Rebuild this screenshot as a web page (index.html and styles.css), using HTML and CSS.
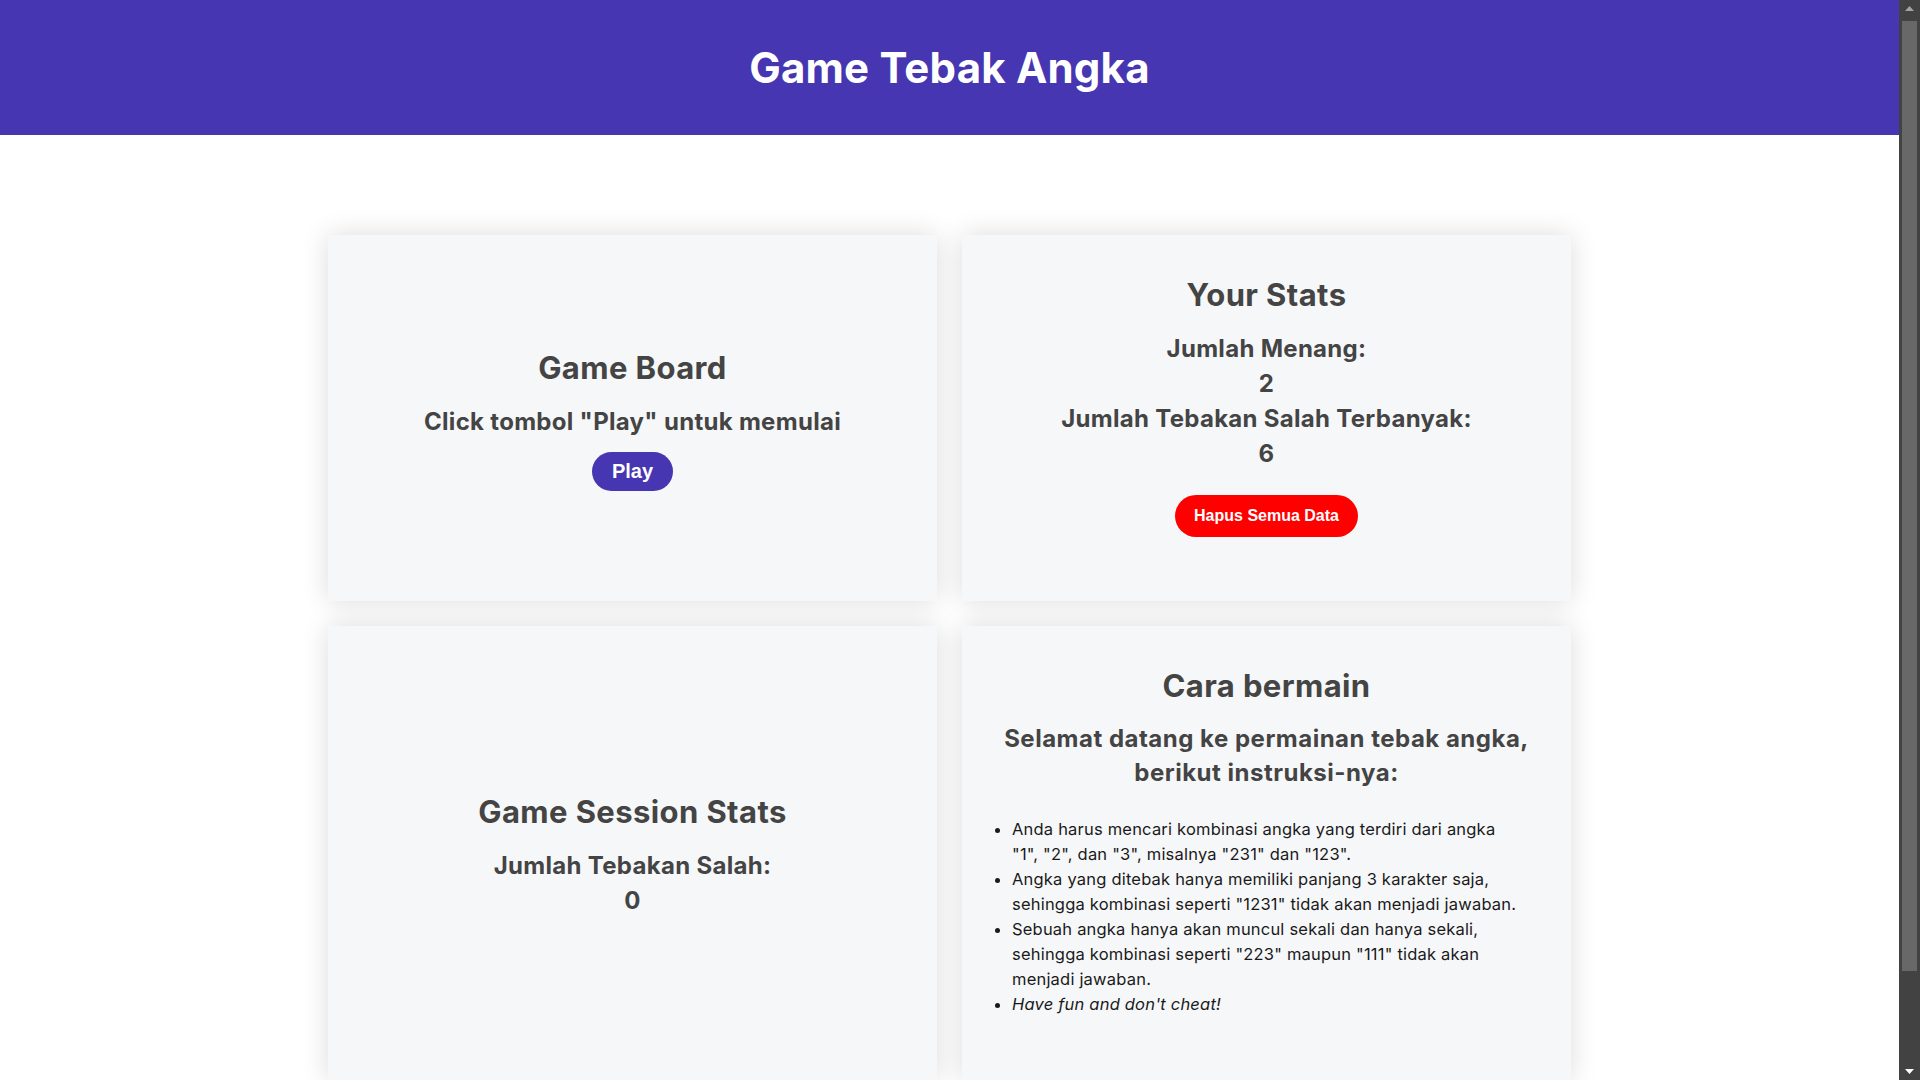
FILE: index.html
```html
<!DOCTYPE html>
<html lang="id">
<head>
<meta charset="utf-8">
<title>Game Tebak Angka</title>
<link rel="stylesheet" href="styles.css">
</head>
<body>
<header class="site-header">
  <h1 class="site-title">Game Tebak Angka</h1>
</header>
<main class="board">
  <section class="card">
    <h2 class="card-title">Game Board</h2>
    <h3 class="card-line">Click tombol "Play" untuk memulai</h3>
    <button class="btn btn-play" type="button">Play</button>
  </section>
  <section class="card">
    <h2 class="card-title">Your Stats</h2>
    <h3 class="card-line">Jumlah Menang:</h3>
    <p class="card-line">2</p>
    <h3 class="card-line">Jumlah Tebakan Salah Terbanyak:</h3>
    <p class="card-line">6</p>
    <button class="btn btn-danger card-last" type="button">Hapus Semua Data</button>
  </section>
  <section class="card">
    <h2 class="card-title">Game Session Stats</h2>
    <h3 class="card-line">Jumlah Tebakan Salah:</h3>
    <p class="card-line">0</p>
  </section>
  <section class="card">
    <h2 class="card-title">Cara bermain</h2>
    <h3 class="card-intro">Selamat datang ke permainan tebak angka, berikut instruksi-nya:</h3>
    <ul class="rules card-last">
      <li>Anda harus mencari kombinasi angka yang terdiri dari angka "1", "2", dan "3", misalnya "231" dan "123".</li>
      <li>Angka yang ditebak hanya memiliki panjang 3 karakter saja, sehingga kombinasi seperti "1231" tidak akan menjadi jawaban.</li>
      <li>Sebuah angka hanya akan muncul sekali dan hanya sekali, sehingga kombinasi seperti "223" maupun "111" tidak akan menjadi jawaban.</li>
      <li><em>Have fun and don't cheat!</em></li>
    </ul>
  </section>
</main>
<div class="scrollbar" aria-hidden="true">
  <div class="sb-button">
    <svg width="9" height="5" viewBox="0 0 9 5"><path d="M0 5L4.5 0L9 5z" fill="#a3a3a3"/></svg>
  </div>
  <div class="sb-track"><div class="sb-thumb"></div></div>
  <div class="sb-button">
    <svg width="9" height="5" viewBox="0 0 9 5"><path d="M0 0L4.5 5L9 0z" fill="#ffffff"/></svg>
  </div>
</div>
</body>
</html>
```

FILE: styles.css
```css
html {
  background: #ffffff;
}

body {
  margin: 0 21px 0 0;
  font-family: Inter, "Open Sans", sans-serif;
  color: #444444;
  background: #ffffff;
}

.site-header {
  height: 135px;
  background: #4636b1;
  display: flex;
  align-items: center;
  justify-content: center;
}

.site-title {
  margin: 0;
  color: #ffffff;
  font-size: 42px;
  font-weight: 700;
  letter-spacing: 0.2px;
}

.board {
  max-width: 1243px;
  margin: 100px auto 109px;
  display: grid;
  grid-template-columns: 1fr 1fr;
  gap: 25px;
}

.card {
  background: #f6f7f9;
  box-shadow: 0 0 26px rgba(0, 0, 0, 0.14);
  padding: 38px 10px;
  display: flex;
  flex-direction: column;
  align-items: center;
  justify-content: center;
  text-align: center;
}

.card-title {
  margin: 0 0 14px;
  font-size: 31px;
  line-height: 44px;
  font-weight: 700;
  letter-spacing: 0.4px;
  color: #444444;
}

.card-line {
  margin: 0;
  font-size: 24px;
  line-height: 35px;
  font-weight: 700;
  letter-spacing: 0.3px;
  color: #444444;
}

.card-intro {
  margin: 0 0 27px;
  padding: 0 20px;
  font-size: 24px;
  line-height: 34px;
  font-weight: 700;
  letter-spacing: 0.5px;
  color: #444444;
}

.btn {
  font-family: "Liberation Sans", Arial, sans-serif;
  font-weight: 700;
  color: #ffffff;
  border: none;
  border-radius: 22px;
  cursor: pointer;
}

.btn-play {
  margin-top: 13px;
  padding: 8px 20px;
  font-size: 20px;
  line-height: 23px;
  background: #4636b1;
}

.btn-danger {
  margin-top: 24px;
  padding: 12px 19px;
  font-size: 16px;
  line-height: 18px;
  background: #ff0000;
}

.card-last {
  margin-bottom: 26px;
}

.rules {
  align-self: stretch;
  margin-top: 0;
  padding: 0 43px 0 40px;
  text-align: left;
  font-size: 16.5px;
  line-height: 25px;
  letter-spacing: 0.2px;
  color: #1a1a1a;
}

.scrollbar {
  position: fixed;
  top: 0;
  right: 0;
  width: 21px;
  height: 100vh;
  background: #424242;
  display: flex;
  flex-direction: column;
}

.sb-button {
  height: 17px;
  flex: none;
  display: flex;
  align-items: center;
  justify-content: center;
}

.sb-track {
  flex: 1;
  padding: 4px 3px 0;
}

.sb-thumb {
  height: 950px;
  background: #686868;
}
```
